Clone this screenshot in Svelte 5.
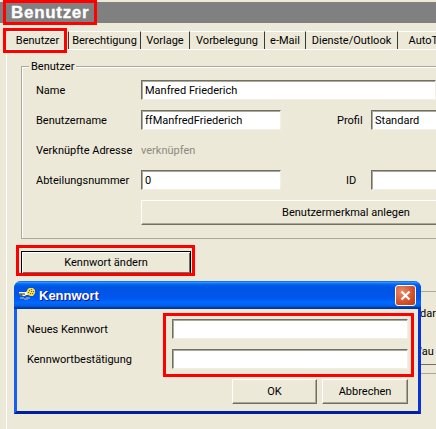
<script>
  const tabs = [
    { label: 'Benutzer', width: 62, active: true },
    { label: 'Berechtigung', width: 72 },
    { label: 'Vorlage', width: 49 },
    { label: 'Vorbelegung', width: 75 },
    { label: 'e-Mail', width: 41 },
    { label: 'Dienste/Outlook', width: 92 },
    { label: 'AutoText', width: 66 }
  ];
</script>

<div class="page">
  <header class="band"><h1>Benutzer</h1></header>

  <nav class="tabs">
    {#each tabs as t}
      <div class="tab" class:active={t.active} style="width:{t.width}px">{t.label}</div>
    {/each}
  </nav>

  <section class="panel">
    <div class="group">
      <span class="legend">Benutzer</span>
      <div class="row">
        <span class="lbl">Name</span>
        <div class="input wide">Manfred Friederich</div>
      </div>
      <div class="row">
        <span class="lbl">Benutzername</span>
        <div class="input">ffManfredFriederich</div>
        <span class="lbl2 profil">Profil</span>
        <div class="input side">Standard</div>
      </div>
      <div class="row">
        <span class="lbl">Verknüpfte Adresse</span>
        <span class="link">verknüpfen</span>
      </div>
      <div class="row">
        <span class="lbl">Abteilungsnummer</span>
        <div class="input">0</div>
        <span class="lbl2 id">ID</span>
        <div class="input side"></div>
      </div>
      <div class="row btnrow">
        <span class="lbl"></span>
        <div class="btn merkmal">Benutzermerkmal anlegen</div>
      </div>
    </div>

    <div class="btn kennwort">Kennwort ändern</div>
  </section>

  <!-- Text of the page that peeks out to the right of the dialog -->
  <div class="behind b1">dark</div>
  <div class="behind b2">'au</div>
  <div class="bline l1"></div>
  <div class="bline l2"></div>
  <div class="bline l3"></div>

  <div class="dialog">
    <div class="titlebar">
      <svg class="key" width="17" height="14" viewBox="0 0 17 14">
        <path d="M1 9h4v1h2V9h4v2H9v1H5v-1H1z" fill="#8a98b0" opacity=".85"/>
        <path d="M0 4h7l1-1h1v4H7L6 8H4L3 7 2 8 0 6z" fill="#fffbe0"/>
        <path d="M0 6h6M1 7h2" stroke="#2a2a20" stroke-width="1"/>
        <path d="M8 2l2-2h4l2 2v3l-2 3h-3L8 6z" fill="#f2dc48"/>
        <path d="M10 2h1v1h-1zM12 1h1v1h-1zM14 3h1v1h-1zM11 5h1v1h-1zM13 5h1v1h-1zM9 4h1v1H9zM12 3h1v1h-1z" fill="#6f6a20"/>
      </svg>
      <span class="title">Kennwort</span>
      <div class="close">
        <svg width="11" height="11" viewBox="0 0 11 11"><path d="M1.5 1.5l8 8M9.5 1.5l-8 8" stroke="#fff" stroke-width="2.2" fill="none"/></svg>
      </div>
    </div>
    <div class="dbody">
      <div class="drow"><span class="dlbl">Neues Kennwort</span><div class="input dinput"></div></div>
      <div class="drow"><span class="dlbl">Kennwortbestätigung</span><div class="input dinput"></div></div>
      <div class="actions">
        <div class="btn ok">OK</div>
        <div class="btn cancel">Abbrechen</div>
      </div>
    </div>
  </div>

  <div class="mark m1"></div>
  <div class="mark m2"></div>
  <div class="mark m3"></div>
  <div class="mark m4"></div>
</div>

<style>
  :global(body) { margin: 0; background: #ece9d8; }
  .page {
    position: relative;
    width: 436px;
    height: 429px;
    overflow: hidden;
    background: #ece9d8;
    font-family: Roboto, "Liberation Sans", Arial, sans-serif;
    font-size: 11px;
    color: #000;
    padding-top: 2px;
    box-sizing: border-box;
  }
  .band {
    height: 21px;
    background: #808080;
    display: flex;
    align-items: center;
    padding-left: 11px;
  }
  h1 {
    margin: 0;
    color: #fff;
    font-family: "Liberation Sans", Arial, sans-serif;
    font-size: 17px;
    line-height: 21px;
    font-weight: bold;
    letter-spacing: 0.7px;
    -webkit-text-stroke: 0.3px #fff;
  }
  .tabs {
    display: flex;
    height: 18px;
    margin-top: 8px;
    padding-left: 7px;
  }
  .tab {
    box-sizing: border-box;
    flex: none;
    height: 18px;
    border-top: 1px solid #fff;
    border-right: 1px solid #3b3a32;
    padding-top: 1px;
    text-align: center;
    line-height: 16px;
    white-space: nowrap;
  }
  .panel {
    margin-left: 6px;
    border-left: 1px solid #fff;
    border-top: 1px solid #fff;
    height: 380px;
    padding: 16px 0 0 14px;
  }
  .group {
    position: relative;
    box-sizing: border-box;
    width: 500px;
    height: 173px;
    border: 1px solid #aca899;
    border-right: none;
    padding: 13px 0 0 14px;
    box-shadow: inset 1px 1px 0 #fff;
  }
  .legend {
    position: absolute;
    top: -7px;
    left: 7px;
    padding: 0 2px;
    background: #ece9d8;
    line-height: 13px;
  }
  .row {
    display: flex;
    align-items: center;
    height: 20px;
    margin-bottom: 10px;
  }
  .btnrow { height: 25px; }
  .lbl { width: 105px; flex: none; white-space: nowrap; }
  .link { color: #8c8a80; }
  .input {
    box-sizing: border-box;
    flex: none;
    width: 140px;
    height: 20px;
    background: #fff;
    border: 1px solid;
    border-color: #716f64 #f1efe2 #f1efe2 #716f64;
    box-shadow: inset 1px 1px 0 #aca899;
    padding: 0 0 0 3px;
    line-height: 19px;
    white-space: nowrap;
    overflow: hidden;
  }
  .wide { width: 295px; }
  .lbl2 { flex: none; }
  .profil { margin-left: 56px; width: 34px; }
  .id { margin-left: 65px; width: 25px; }
  .side { width: 100px; }
  .btn {
    box-sizing: border-box;
    flex: none;
    background: #ece9d8;
    border: 1px solid;
    border-color: #fff #716f64 #716f64 #fff;
    box-shadow: inset -1px -1px 0 #aca899;
    display: flex;
    align-items: center;
    justify-content: center;
    white-space: nowrap;
  }
  .merkmal { width: 410px; height: 25px; }
  .kennwort {
    width: 170px;
    height: 23px;
    margin-top: 12px;
    border-color: #000;
    box-shadow: inset 1px 1px 0 #fff, inset -1px -1px 0 #716f64;
  }
  .behind { position: absolute; left: 420px; white-space: nowrap; line-height: 13px; }
  .b1 { top: 307px; }
  .b2 { top: 345px; }
  .bline { position: absolute; left: 421px; width: 15px; height: 1px; }
  .l1 { top: 291px; background: #aca899; }
  .l2 { top: 364px; background: #716f64; }
  .l3 { top: 373px; background: #aca899; }

  .dialog {
    position: absolute;
    left: 14px;
    top: 281px;
    width: 407px;
    height: 133px;
    box-sizing: border-box;
    border: 3px solid;
    border-color: #0831d9 #0831d9 #001ea0 #1660f0;
    border-top: none;
    border-radius: 7px 7px 0 0;
    background: #ece9d8;
  }
  .titlebar {
    position: relative;
    height: 28px;
    margin: 0 -3px;
    border-radius: 7px 7px 0 0;
    display: flex;
    align-items: center;
    padding: 0 5px 0 5px;
    background: linear-gradient(180deg,#0058ee 0%,#3593ff 4%,#288eff 6%,#127dff 8%,#036ffc 10%,#0262ee 14%,#0057e5 20%,#0054e3 24%,#0055eb 56%,#005bf5 66%,#026afe 76%,#0062ef 86%,#0052d6 92%,#0040ab 94%,#003092 100%);
  }
  .key { flex: none; }
  .title {
    margin-left: 3px;
    color: #fff;
    font-family: "Liberation Sans", Arial, sans-serif;
    font-weight: bold;
    font-size: 13px;
    text-shadow: 1px 1px 0 #0f1089;
    flex: 1;
  }
  .close {
    box-sizing: border-box;
    width: 21px;
    height: 21px;
    border: 1px solid #fff;
    border-radius: 3px;
    background: radial-gradient(circle at 30% 30%, #e98a6a, #d4502a 60%, #b83a18);
    display: flex;
    align-items: center;
    justify-content: center;
  }
  .dbody { padding: 10px 10px 0 10px; }
  .drow {
    display: flex;
    align-items: center;
    height: 20px;
    margin-bottom: 10px;
  }
  .dlbl { width: 145px; flex: none; }
  .dinput { width: 236px; }
  .actions {
    display: flex;
    justify-content: flex-end;
    gap: 5px;
  }
  .ok { width: 85px; height: 25px; }
  .cancel { width: 86px; height: 25px; }

  .mark { position: absolute; box-sizing: border-box; border: 3px solid #ff0000; }
  .m1 { left: 3px; top: 0; width: 94px; height: 25px; }
  .m2 { left: 3px; top: 28px; width: 64px; height: 25px; }
  .m3 { left: 16px; top: 245px; width: 179px; height: 31px; }
  .m4 { left: 163px; top: 313px; width: 251px; height: 64px; }
</style>
